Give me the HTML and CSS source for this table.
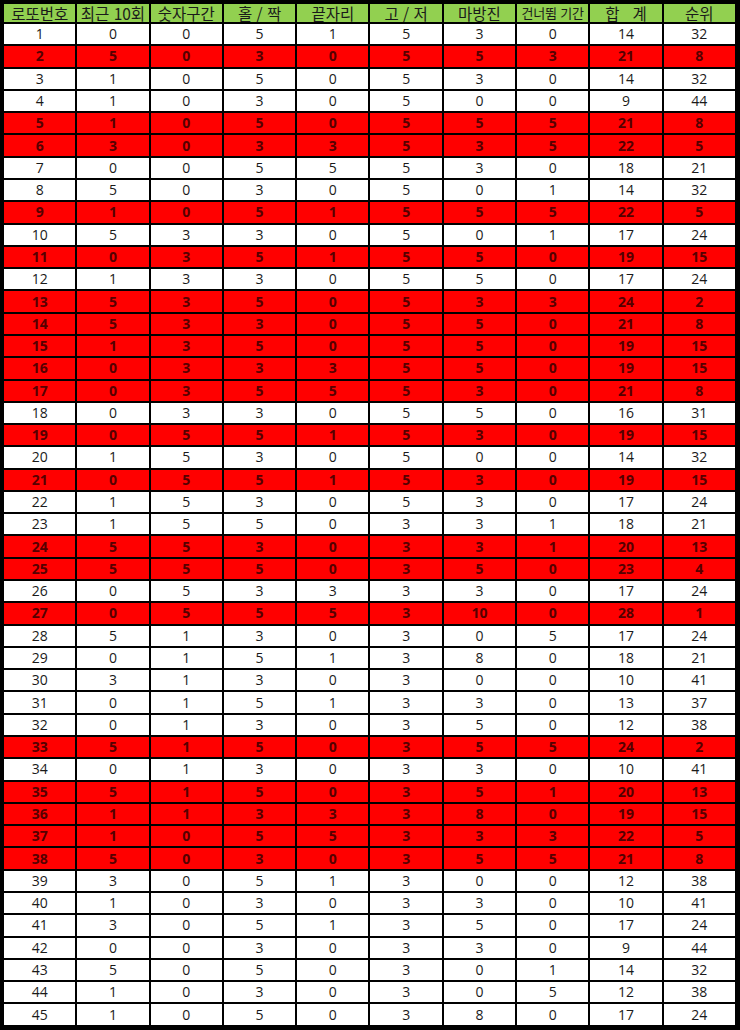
FILE: index.html
```html
<!DOCTYPE html>
<html lang="ko">
<head>
<meta charset="utf-8">
<link rel="stylesheet" href="styles.css">
</head>
<body>
<table class="grid">
<thead>
<tr class="head"><th>로또번호</th><th>최근 10회</th><th>숫자구간</th><th>홀 / 짝</th><th>끝자리</th><th>고 / 저</th><th>마방진</th><th class="small">건너뜀 기간</th><th>합&nbsp;&nbsp;&nbsp;계</th><th>순위</th></tr>
</thead>
<tbody>
<tr><td>1</td><td>0</td><td>0</td><td>5</td><td>1</td><td>5</td><td>3</td><td>0</td><td>14</td><td>32</td></tr>
<tr class="hot"><td>2</td><td>5</td><td>0</td><td>3</td><td>0</td><td>5</td><td>5</td><td>3</td><td>21</td><td>8</td></tr>
<tr><td>3</td><td>1</td><td>0</td><td>5</td><td>0</td><td>5</td><td>3</td><td>0</td><td>14</td><td>32</td></tr>
<tr><td>4</td><td>1</td><td>0</td><td>3</td><td>0</td><td>5</td><td>0</td><td>0</td><td>9</td><td>44</td></tr>
<tr class="hot"><td>5</td><td>1</td><td>0</td><td>5</td><td>0</td><td>5</td><td>5</td><td>5</td><td>21</td><td>8</td></tr>
<tr class="hot"><td>6</td><td>3</td><td>0</td><td>3</td><td>3</td><td>5</td><td>3</td><td>5</td><td>22</td><td>5</td></tr>
<tr><td>7</td><td>0</td><td>0</td><td>5</td><td>5</td><td>5</td><td>3</td><td>0</td><td>18</td><td>21</td></tr>
<tr><td>8</td><td>5</td><td>0</td><td>3</td><td>0</td><td>5</td><td>0</td><td>1</td><td>14</td><td>32</td></tr>
<tr class="hot"><td>9</td><td>1</td><td>0</td><td>5</td><td>1</td><td>5</td><td>5</td><td>5</td><td>22</td><td>5</td></tr>
<tr><td>10</td><td>5</td><td>3</td><td>3</td><td>0</td><td>5</td><td>0</td><td>1</td><td>17</td><td>24</td></tr>
<tr class="hot"><td>11</td><td>0</td><td>3</td><td>5</td><td>1</td><td>5</td><td>5</td><td>0</td><td>19</td><td>15</td></tr>
<tr><td>12</td><td>1</td><td>3</td><td>3</td><td>0</td><td>5</td><td>5</td><td>0</td><td>17</td><td>24</td></tr>
<tr class="hot"><td>13</td><td>5</td><td>3</td><td>5</td><td>0</td><td>5</td><td>3</td><td>3</td><td>24</td><td>2</td></tr>
<tr class="hot"><td>14</td><td>5</td><td>3</td><td>3</td><td>0</td><td>5</td><td>5</td><td>0</td><td>21</td><td>8</td></tr>
<tr class="hot"><td>15</td><td>1</td><td>3</td><td>5</td><td>0</td><td>5</td><td>5</td><td>0</td><td>19</td><td>15</td></tr>
<tr class="hot"><td>16</td><td>0</td><td>3</td><td>3</td><td>3</td><td>5</td><td>5</td><td>0</td><td>19</td><td>15</td></tr>
<tr class="hot"><td>17</td><td>0</td><td>3</td><td>5</td><td>5</td><td>5</td><td>3</td><td>0</td><td>21</td><td>8</td></tr>
<tr><td>18</td><td>0</td><td>3</td><td>3</td><td>0</td><td>5</td><td>5</td><td>0</td><td>16</td><td>31</td></tr>
<tr class="hot"><td>19</td><td>0</td><td>5</td><td>5</td><td>1</td><td>5</td><td>3</td><td>0</td><td>19</td><td>15</td></tr>
<tr><td>20</td><td>1</td><td>5</td><td>3</td><td>0</td><td>5</td><td>0</td><td>0</td><td>14</td><td>32</td></tr>
<tr class="hot"><td>21</td><td>0</td><td>5</td><td>5</td><td>1</td><td>5</td><td>3</td><td>0</td><td>19</td><td>15</td></tr>
<tr><td>22</td><td>1</td><td>5</td><td>3</td><td>0</td><td>5</td><td>3</td><td>0</td><td>17</td><td>24</td></tr>
<tr><td>23</td><td>1</td><td>5</td><td>5</td><td>0</td><td>3</td><td>3</td><td>1</td><td>18</td><td>21</td></tr>
<tr class="hot"><td>24</td><td>5</td><td>5</td><td>3</td><td>0</td><td>3</td><td>3</td><td>1</td><td>20</td><td>13</td></tr>
<tr class="hot"><td>25</td><td>5</td><td>5</td><td>5</td><td>0</td><td>3</td><td>5</td><td>0</td><td>23</td><td>4</td></tr>
<tr><td>26</td><td>0</td><td>5</td><td>3</td><td>3</td><td>3</td><td>3</td><td>0</td><td>17</td><td>24</td></tr>
<tr class="hot"><td>27</td><td>0</td><td>5</td><td>5</td><td>5</td><td>3</td><td>10</td><td>0</td><td>28</td><td>1</td></tr>
<tr><td>28</td><td>5</td><td>1</td><td>3</td><td>0</td><td>3</td><td>0</td><td>5</td><td>17</td><td>24</td></tr>
<tr><td>29</td><td>0</td><td>1</td><td>5</td><td>1</td><td>3</td><td>8</td><td>0</td><td>18</td><td>21</td></tr>
<tr><td>30</td><td>3</td><td>1</td><td>3</td><td>0</td><td>3</td><td>0</td><td>0</td><td>10</td><td>41</td></tr>
<tr><td>31</td><td>0</td><td>1</td><td>5</td><td>1</td><td>3</td><td>3</td><td>0</td><td>13</td><td>37</td></tr>
<tr><td>32</td><td>0</td><td>1</td><td>3</td><td>0</td><td>3</td><td>5</td><td>0</td><td>12</td><td>38</td></tr>
<tr class="hot"><td>33</td><td>5</td><td>1</td><td>5</td><td>0</td><td>3</td><td>5</td><td>5</td><td>24</td><td>2</td></tr>
<tr><td>34</td><td>0</td><td>1</td><td>3</td><td>0</td><td>3</td><td>3</td><td>0</td><td>10</td><td>41</td></tr>
<tr class="hot"><td>35</td><td>5</td><td>1</td><td>5</td><td>0</td><td>3</td><td>5</td><td>1</td><td>20</td><td>13</td></tr>
<tr class="hot"><td>36</td><td>1</td><td>1</td><td>3</td><td>3</td><td>3</td><td>8</td><td>0</td><td>19</td><td>15</td></tr>
<tr class="hot"><td>37</td><td>1</td><td>0</td><td>5</td><td>5</td><td>3</td><td>3</td><td>3</td><td>22</td><td>5</td></tr>
<tr class="hot"><td>38</td><td>5</td><td>0</td><td>3</td><td>0</td><td>3</td><td>5</td><td>5</td><td>21</td><td>8</td></tr>
<tr><td>39</td><td>3</td><td>0</td><td>5</td><td>1</td><td>3</td><td>0</td><td>0</td><td>12</td><td>38</td></tr>
<tr><td>40</td><td>1</td><td>0</td><td>3</td><td>0</td><td>3</td><td>3</td><td>0</td><td>10</td><td>41</td></tr>
<tr><td>41</td><td>3</td><td>0</td><td>5</td><td>1</td><td>3</td><td>5</td><td>0</td><td>17</td><td>24</td></tr>
<tr><td>42</td><td>0</td><td>0</td><td>3</td><td>0</td><td>3</td><td>3</td><td>0</td><td>9</td><td>44</td></tr>
<tr><td>43</td><td>5</td><td>0</td><td>5</td><td>0</td><td>3</td><td>0</td><td>1</td><td>14</td><td>32</td></tr>
<tr><td>44</td><td>1</td><td>0</td><td>3</td><td>0</td><td>3</td><td>0</td><td>5</td><td>12</td><td>38</td></tr>
<tr><td>45</td><td>1</td><td>0</td><td>5</td><td>0</td><td>3</td><td>8</td><td>0</td><td>17</td><td>24</td></tr>
</tbody>
</table>
</body>
</html>
```
FILE: styles.css
```css
html, body {
  margin: 0;
  padding: 0;
  background: #ffffff;
}

.grid {
  width: 740px;
  height: 1030px;
  box-sizing: border-box;
  border-collapse: separate;
  border-spacing: 2px;
  border: 2px solid #000;
  border-right-width: 3px;
  border-bottom-width: 3px;
  background: #000;
  table-layout: fixed;
  font-family: "Open Sans", "Noto Sans CJK KR", sans-serif;
  font-size: 14px;
  color: #1a1a1a;
}

.grid th,
.grid td {
  padding: 0;
  text-align: center;
  vertical-align: middle;
  line-height: 18px;
  background: #fff;
}

.grid th {
  background: #92d050;
  font-family: "Noto Sans CJK KR", sans-serif;
  font-weight: 400;
  font-size: 15.5px;
  color: #1a1a1a;
  white-space: nowrap;
}

.grid th.small {
  font-size: 13px;
  letter-spacing: -0.2px;
}

.grid tr.hot td {
  background: #ff0000;
  color: #550000;
  font-weight: 700;
}
```
